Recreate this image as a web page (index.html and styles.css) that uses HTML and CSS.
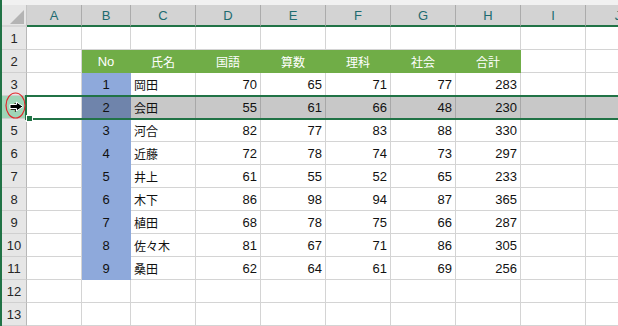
FILE: index.html
```html
<!DOCTYPE html>
<html lang="ja">
<head>
<meta charset="utf-8">
<title>Sheet</title>
<link rel="stylesheet" href="styles.css">
</head>
<body>
<div class="app">
  <div class="topstrip"></div>
  <div class="sheet">
    <div class="corner"><span class="tri"></span></div>
    <div class="ch">A</div><div class="ch">B</div><div class="ch">C</div><div class="ch">D</div><div class="ch">E</div><div class="ch">F</div><div class="ch">G</div><div class="ch">H</div><div class="ch">I</div><div class="ch">J</div>

    <div class="rh">1</div>
    <div class="c"></div><div class="c"></div><div class="c"></div><div class="c"></div><div class="c"></div><div class="c"></div><div class="c"></div><div class="c"></div><div class="c"></div><div class="c"></div>

    <div class="rh">2</div>
    <div class="c"></div>
    <div class="c g">No</div><div class="c g jp">氏名</div><div class="c g jp">国語</div><div class="c g jp">算数</div><div class="c g jp">理科</div><div class="c g jp">社会</div><div class="c g jp">合計</div>
    <div class="c"></div><div class="c"></div>

    <div class="rh">3</div>
    <div class="c"></div><div class="c b ctr">1</div><div class="c jp">岡田</div><div class="c num">70</div><div class="c num">65</div><div class="c num">71</div><div class="c num">77</div><div class="c num">283</div><div class="c"></div><div class="c"></div>

    <div class="rh rsel">4</div>
    <div class="c active"></div><div class="c b s ctr">2</div><div class="c s jp">会田</div><div class="c s num">55</div><div class="c s num">61</div><div class="c s num">66</div><div class="c s num">48</div><div class="c s num">230</div><div class="c s"></div><div class="c s"></div>

    <div class="rh">5</div>
    <div class="c"></div><div class="c b ctr">3</div><div class="c jp">河合</div><div class="c num">82</div><div class="c num">77</div><div class="c num">83</div><div class="c num">88</div><div class="c num">330</div><div class="c"></div><div class="c"></div>

    <div class="rh">6</div>
    <div class="c"></div><div class="c b ctr">4</div><div class="c jp">近藤</div><div class="c num">72</div><div class="c num">78</div><div class="c num">74</div><div class="c num">73</div><div class="c num">297</div><div class="c"></div><div class="c"></div>

    <div class="rh">7</div>
    <div class="c"></div><div class="c b ctr">5</div><div class="c jp">井上</div><div class="c num">61</div><div class="c num">55</div><div class="c num">52</div><div class="c num">65</div><div class="c num">233</div><div class="c"></div><div class="c"></div>

    <div class="rh">8</div>
    <div class="c"></div><div class="c b ctr">6</div><div class="c jp">木下</div><div class="c num">86</div><div class="c num">98</div><div class="c num">94</div><div class="c num">87</div><div class="c num">365</div><div class="c"></div><div class="c"></div>

    <div class="rh">9</div>
    <div class="c"></div><div class="c b ctr">7</div><div class="c jp">植田</div><div class="c num">68</div><div class="c num">78</div><div class="c num">75</div><div class="c num">66</div><div class="c num">287</div><div class="c"></div><div class="c"></div>

    <div class="rh">10</div>
    <div class="c"></div><div class="c b ctr">8</div><div class="c jp">佐々木</div><div class="c num">81</div><div class="c num">67</div><div class="c num">71</div><div class="c num">86</div><div class="c num">305</div><div class="c"></div><div class="c"></div>

    <div class="rh">11</div>
    <div class="c"></div><div class="c b ctr">9</div><div class="c jp">桑田</div><div class="c num">62</div><div class="c num">64</div><div class="c num">61</div><div class="c num">69</div><div class="c num">256</div><div class="c"></div><div class="c"></div>

    <div class="rh">12</div>
    <div class="c"></div><div class="c"></div><div class="c"></div><div class="c"></div><div class="c"></div><div class="c"></div><div class="c"></div><div class="c"></div><div class="c"></div><div class="c"></div>

    <div class="rh">13</div>
    <div class="c"></div><div class="c"></div><div class="c"></div><div class="c"></div><div class="c"></div><div class="c"></div><div class="c"></div><div class="c"></div><div class="c"></div><div class="c"></div>
  </div>

  <div class="selection"></div>
  <div class="handle"></div>
  <svg class="marker" width="30" height="36" viewBox="0 0 30 36">
    <ellipse cx="15.5" cy="17.5" rx="9.5" ry="12.5" fill="none" stroke="#e2262b" stroke-width="1.2"/>
    <polygon points="10,16.5 16.5,16.5 16.5,14 23,18.5 16.5,23 16.5,20.5 10,20.5" fill="#000" stroke="#fff" stroke-width="1"/>
  </svg>
</div>
</body>
</html>
```

FILE: styles.css
```css
html, body {
  margin: 0;
  padding: 0;
  background: #fff;
}

.app {
  position: relative;
  width: 616px;
  height: 326px;
  border-left: 2px solid #217346;
  overflow: hidden;
  background: #fff;
}

.topstrip {
  height: 5px;
  background: #f1f1f1;
}

.sheet {
  display: grid;
  grid-template-columns: 25px 55px 49px 65px 65px 65px 65px 65px 65px 65px 65px;
  grid-template-rows: 22px;
  grid-auto-rows: 23px;
  width: 649px;
  font-family: "Liberation Sans", "Noto Sans CJK JP", sans-serif;
  font-size: 13px;
  color: #111;
}

.sheet > div {
  box-sizing: border-box;
  display: flex;
  align-items: center;
  overflow: hidden;
  white-space: nowrap;
}

.corner {
  position: relative;
  background: #e6e6e6;
  border-right: 1px solid #c4c4c4;
  border-bottom: 2px solid #d6d6d6;
}

.tri {
  position: absolute;
  right: 2px;
  bottom: 1px;
  width: 0;
  height: 0;
  border-left: 14px solid transparent;
  border-bottom: 14px solid #b4b4b4;
}

.ch {
  justify-content: center;
  background: #d3d3d3;
  border-right: 1px solid #ababab;
  border-bottom: 2px solid #217346;
  color: #1d6b70;
}

.rh {
  justify-content: center;
  background: #e6e6e6;
  border-right: 1px solid #b8b8b8;
  border-bottom: 1px solid #d0d0d0;
  color: #262626;
}

.rh.rsel {
  background: #9fd5b7;
}

.c {
  border-right: 1px solid #d4d4d4;
  border-bottom: 1px solid #d4d4d4;
  padding: 0 3px;
}

.num {
  justify-content: flex-end;
}

.ctr {
  justify-content: center;
}

.jp {
  font-size: 12px;
}

.g {
  justify-content: center;
  background: #70ad47;
  border-color: #70ad47;
  color: #fff;
}

.b {
  background: #8ea9db;
  border-color: #8ea9db;
}

.s {
  background: #c8c8c8;
  border-right-color: #a8a8a8;
  border-bottom-color: #a8a8a8;
}

.b.s {
  background: #6f84ab;
  border-color: #6f84ab;
}

.active {
  background: #fff;
}

.selection {
  position: absolute;
  left: 23px;
  top: 95px;
  width: 640px;
  height: 25px;
  box-sizing: border-box;
  border: 2px solid #217346;
  border-right: none;
}

.handle {
  position: absolute;
  left: 24px;
  top: 115px;
  width: 5px;
  height: 5px;
  background: #217346;
  border: 1px solid #fff;
}

.marker {
  position: absolute;
  left: -2px;
  top: 88px;
}
```
